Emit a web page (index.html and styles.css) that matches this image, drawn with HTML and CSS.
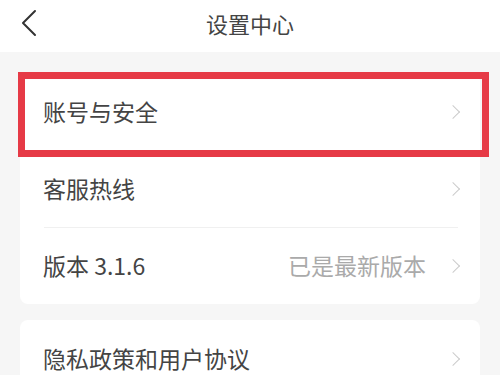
FILE: index.html
```html
<!DOCTYPE html>
<html lang="zh-CN">
<head>
    <meta charset="UTF-8">
    <meta name="viewport" content="width=device-width, initial-scale=1.0">
    <title>设置中心</title>
    <link rel="stylesheet" href="styles.css">
</head>
<body>
    <header class="top-bar">
        <button class="back-button" aria-label="返回">
            <svg width="18" height="28" viewBox="0 0 18 28">
                <path d="M15 2 L3 14 L15 26" fill="none" stroke="#333" stroke-width="2" stroke-linecap="round" stroke-linejoin="round"/>
            </svg>
        </button>
        <h1 class="title">设置中心</h1>
    </header>
    <main class="settings">
        <div class="card">
            <div class="row">
                <span class="label">账号与安全</span>
                <span class="arrow"></span>
            </div>
            <div class="row">
                <span class="label">客服热线</span>
                <span class="arrow"></span>
            </div>
            <div class="row">
                <span class="label">版本 3.1.6</span>
                <span class="value">已是最新版本</span>
                <span class="arrow"></span>
            </div>
            <!-- 标注框 -->
            <div class="highlight"></div>
        </div>
        <div class="card">
            <div class="row">
                <span class="label">隐私政策和用户协议</span>
                <span class="arrow"></span>
            </div>
        </div>
    </main>
</body>
</html>
```

FILE: styles.css
```css
body {
    font-family: "Noto Sans CJK SC", "Noto Sans", sans-serif;
    margin: 0;
    padding: 0;
    width: 500px;
    height: 375px;
    overflow: hidden;
    background-color: #f6f6f6;
    color: #444;
}
.top-bar {
    height: 46px;
    padding-bottom: 6px;
    background-color: #fff;
    display: flex;
    align-items: center;
    justify-content: center;
    position: relative;
}
.back-button {
    position: absolute;
    left: 20px;
    top: 9px;
    background: none;
    border: none;
    padding: 0;
    cursor: pointer;
}
.back-button svg {
    display: block;
}
.title {
    margin: 0;
    font-size: 22px;
    font-weight: normal;
    color: #444;
    line-height: 1;
}
.settings {
    padding: 21px 20px 0;
    display: flex;
    flex-direction: column;
    gap: 16px;
}
.card {
    background-color: #fff;
    border-radius: 8px;
    position: relative;
}
.row {
    height: 77px;
    display: flex;
    align-items: center;
    padding: 0 18px 0 23px;
    position: relative;
}
.row + .row::before {
    content: "";
    position: absolute;
    top: 0;
    left: 24px;
    right: 22px;
    border-top: 1px solid #f0f0f0;
}
.label {
    flex: 1;
    font-size: 23px;
    line-height: 1;
}
.value {
    font-size: 23px;
    line-height: 1;
    color: #aaa;
    margin-right: 22px;
}
.arrow {
    width: 9px;
    height: 9px;
    border-top: 1.5px solid #ccc;
    border-right: 1.5px solid #ccc;
    transform: rotate(45deg);
    margin-right: 4px;
}
.highlight {
    position: absolute;
    left: -2px;
    top: -1px;
    width: 471px;
    height: 85px;
    box-sizing: border-box;
    border: 7px solid #e63a46;
    pointer-events: none;
}
```
